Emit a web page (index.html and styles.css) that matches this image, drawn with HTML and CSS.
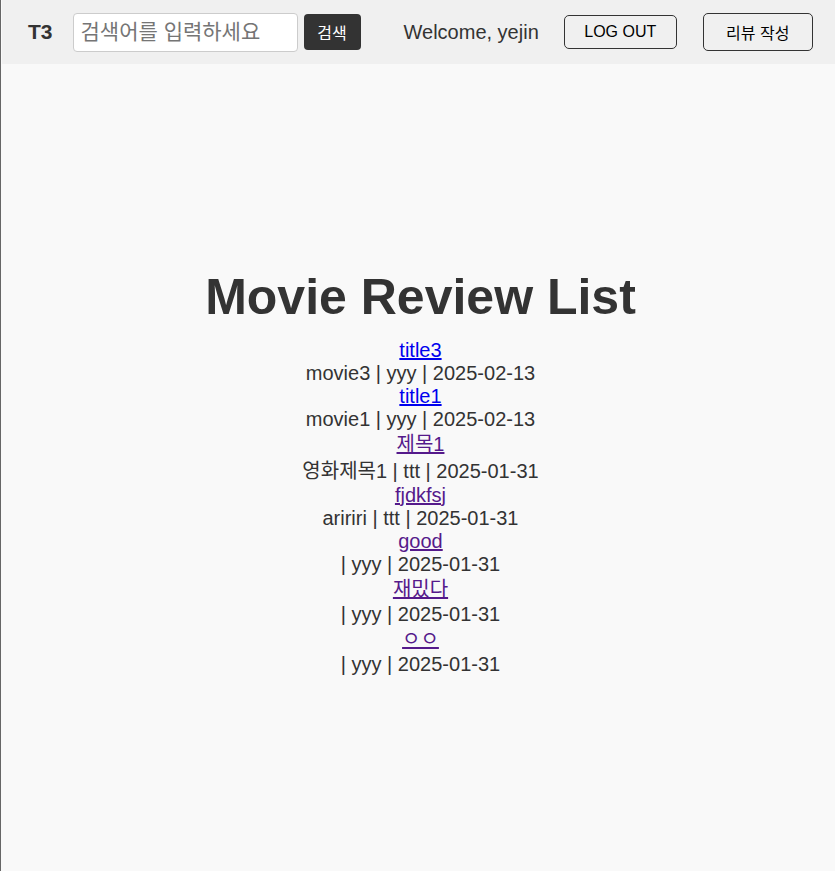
FILE: index.html
```html
<!DOCTYPE html>
<html lang="ko">
<head>
<meta charset="utf-8">
<title>T3</title>
<link rel="stylesheet" href="styles.css">
</head>
<body>
<div class="frame">
  <header class="topbar">
    <div class="brand">T3</div>
    <form class="search">
      <input class="search-input" type="text" placeholder="검색어를 입력하세요">
      <button class="search-btn" type="button">검색</button>
    </form>
    <span class="welcome">Welcome, yejin</span>
    <button class="outline-btn logout" type="button">LOG OUT</button>
    <button class="outline-btn write" type="button">리뷰 작성</button>
  </header>
  <main class="content">
    <h1 class="title">Movie Review List</h1>
    <ul class="reviews">
      <li><a class="link" href="#">title3</a><div class="meta">movie3 | yyy | 2025-02-13</div></li>
      <li><a class="link" href="#">title1</a><div class="meta">movie1 | yyy | 2025-02-13</div></li>
      <li><a class="link visited ko" href="#">제목1</a><div class="meta ko">영화제목1 | ttt | 2025-01-31</div></li>
      <li><a class="link visited" href="#">fjdkfsj</a><div class="meta">aririri | ttt | 2025-01-31</div></li>
      <li><a class="link visited" href="#">good</a><div class="meta"> | yyy | 2025-01-31</div></li>
      <li><a class="link visited ko" href="#">재밌다</a><div class="meta"> | yyy | 2025-01-31</div></li>
      <li><a class="link visited ko" href="#">ㅇㅇ</a><div class="meta"> | yyy | 2025-01-31</div></li>
    </ul>
  </main>
</div>
</body>
</html>
```
FILE: styles.css
```css
html, body {
  margin: 0;
  padding: 0;
  height: 100%;
}
body {
  font-family: "Liberation Sans", Arial, "Noto Sans CJK KR", sans-serif;
  background: #f9f9f9;
  color: #333;
}
.frame {
  min-height: 100%;
  border-left: 1px solid #666;
  box-sizing: border-box;
  display: flex;
  flex-direction: column;
}
.topbar {
  display: flex;
  align-items: center;
  height: 64px;
  margin-left: 1px;
  padding: 0 0 0 26px;
  background: #f0f0f0;
  box-sizing: border-box;
  white-space: nowrap;
}
.topbar > * {
  flex-shrink: 0;
}
.brand {
  font-size: 21px;
  font-weight: bold;
  color: #333;
}
.search {
  display: flex;
  align-items: center;
  margin-left: 20px;
}
.search-input {
  width: 225px;
  height: 39px;
  box-sizing: border-box;
  border: 1px solid #ccc;
  border-radius: 4px;
  padding: 0 7px;
  font-size: 21px;
  font-family: "Liberation Sans", "Noto Sans CJK KR", sans-serif;
  background: #fff;
  color: #333;
}
.search-input::placeholder {
  color: #757575;
}
.search-btn {
  margin-left: 6px;
  width: 57px;
  height: 36px;
  border: none;
  border-radius: 4px;
  background: #333;
  color: #fff;
  font-size: 16px;
  font-family: "Liberation Sans", "Noto Sans CJK KR", sans-serif;
}
.welcome {
  margin-left: 43px;
  font-size: 20px;
  color: #333;
}
.outline-btn {
  height: 34px;
  border: 1px solid #333;
  border-radius: 5px;
  background: transparent;
  color: #000;
  font-size: 16px;
  font-family: "Liberation Sans", "Noto Sans CJK KR", sans-serif;
}
.logout {
  margin-left: 25px;
  width: 113px;
}
.write {
  margin-left: 26px;
  width: 110px;
  height: 38px;
}
.content {
  flex: 1;
  display: flex;
  flex-direction: column;
  align-items: center;
  justify-content: center;
  padding-left: 5px;
  padding-top: 8px;
}
.title {
  margin: 0 0 13px;
  font-size: 50px;
  font-weight: bold;
  color: #333;
}
.reviews {
  list-style: none;
  margin: 0;
  padding: 0;
  text-align: center;
  font-size: 20px;
  line-height: 23px;
}
.reviews .link.ko {
  line-height: 27px;
}
.reviews .meta.ko {
  line-height: 26px;
}
.link {
  color: #0000ee;
}
.link.visited {
  color: #551a8b;
}
.meta {
  color: #333;
}
```
